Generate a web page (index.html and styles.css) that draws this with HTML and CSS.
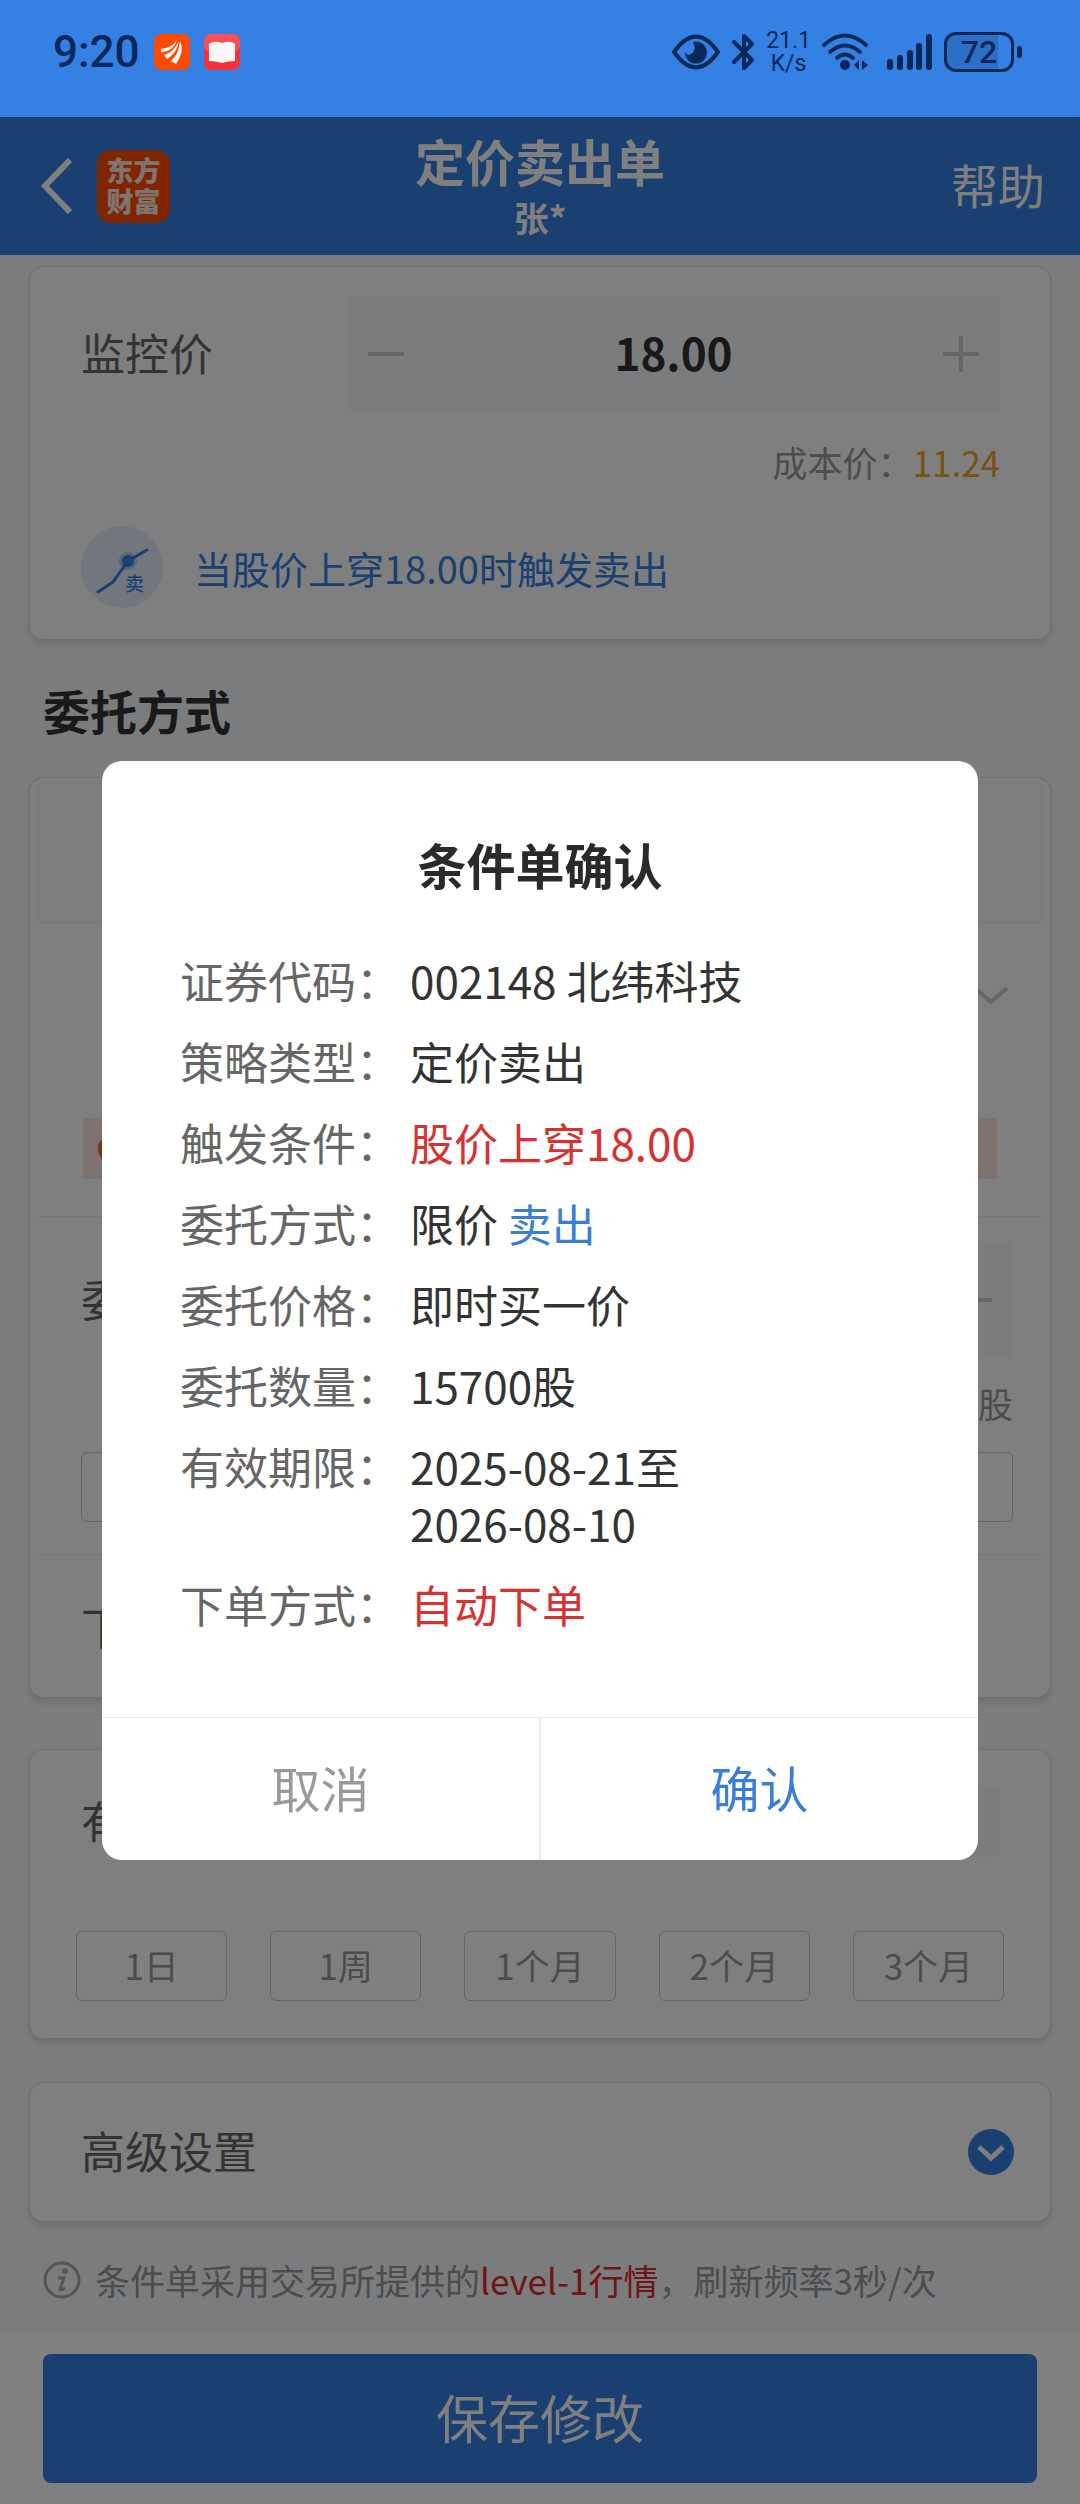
FILE: index.html
```html
<!DOCTYPE html>
<html lang="zh-CN">
<head>
<meta charset="UTF-8">
<meta name="viewport" content="width=device-width, initial-scale=1.0">
<title>定价卖出单</title>
<link rel="stylesheet" href="styles.css">
</head>
<body>

<div class="status-bar">
  <div class="status-left">
    <span class="clock">9:20</span>
    <svg class="app-icon" viewBox="0 0 36 36">
      <rect width="36" height="36" rx="7" fill="#ff4a00"/>
      <path d="M7 15Q18 14 23 6Q20 17 7 18.500ZM10 21Q20 18 25 7Q23 19 13 25ZM17 27Q25 20 26 7Q31 17 22 30Z" fill="#fff"/>
    </svg>
    <svg class="app-icon" viewBox="0 0 36 36">
      <rect width="36" height="36" rx="7" fill="#f5323c"/>
      <rect width="36" height="18" rx="7" fill="#f94f56"/>
      <path d="M5 10q5-4 13-1q8-3 13 1v17q-7 0-13 2q-6-2-13-2z" fill="#fff6f6"/>
    </svg>
  </div>
  <div class="status-right">
    <svg width="48" height="36" viewBox="0 0 48 36">
      <path d="M2 18Q24-13 46 18Q24 49 2 18Z" fill="none" stroke="#06295a" stroke-width="4"/>
      <path d="M21 8a11 11 0 1 1-8 10q2 4 6 2q6-4 2-12z" fill="#06295a"/>
    </svg>
    <svg width="24" height="38" viewBox="0 0 24 38">
      <path d="M3 9L21 27L13 35V3L21 11L3 29" fill="none" stroke="#06295a" stroke-width="4" stroke-linecap="round" stroke-linejoin="round"/>
    </svg>
    <span class="net-speed">21.1<br>K/s</span>
    <svg class="wifi" width="46" height="38" viewBox="0 0 46 38">
      <g fill="none" stroke="#06295a" stroke-width="4" stroke-linecap="round">
        <path d="M2 12Q23-7 44 12"/>
        <path d="M8 19Q23 6 38 19"/>
        <path d="M15 25Q23 18 31 25"/>
      </g>
      <circle cx="23" cy="32" r="5" fill="#06295a"/>
      <path d="M37 27v10l-5-5zM40 27v10l6-5z" fill="#06295a"/>
    </svg>
    <svg width="46" height="38" viewBox="0 0 46 38" fill="#06295a">
      <rect x="0" y="26" width="6" height="11" rx="3"/>
      <rect x="10" y="22" width="6" height="15" rx="3"/>
      <rect x="20" y="17" width="6" height="20" rx="3"/>
      <rect x="29" y="10" width="6" height="27" rx="3"/>
      <rect x="39" y="1" width="6" height="36" rx="3"/>
    </svg>
    <span class="battery"><span class="battery-box">72</span><span class="battery-tip"></span></span>
  </div>
</div>

<div class="app">
  <header class="header">
    <div class="header-side">
      <button type="button" class="back" aria-label="返回">
        <svg width="38" height="56" viewBox="0 0 38 56"><path d="M35 2L10 28L35 54" fill="none" stroke="#fff" stroke-width="6"/></svg>
      </button>
      <span class="logo">东方<br>财富</span>
    </div>
    <div class="header-title">
      <h1>定价卖出单</h1>
      <p>张*</p>
    </div>
    <div class="header-side header-right"><a href="#" class="help">帮助</a></div>
  </header>

  <main class="content">
    <section class="card price-card">
      <div class="field">
        <label for="price">监控价</label>
        <div class="stepper">
          <button type="button" aria-label="减"><svg width="36" height="36" viewBox="0 0 36 36"><path d="M0 18H36" stroke="#ccc" stroke-width="4"/></svg></button>
          <input type="text" id="price" value="18.00">
          <button type="button" aria-label="加"><svg width="36" height="36" viewBox="0 0 36 36"><path d="M0 18H36M18 0V36" stroke="#ccc" stroke-width="4"/></svg></button>
        </div>
      </div>
      <p class="cost">成本价：<span>11.24</span></p>
      <div class="hint">
        <svg width="83" height="83" viewBox="0 0 83 83">
          <circle cx="41" cy="41" r="41" fill="#e6edfb"/>
          <circle cx="47" cy="35" r="9" fill="#347fe2" opacity=".3"/>
          <path d="M17 66L32 56L47 35L66 24" fill="none" stroke="#347fe2" stroke-width="3" stroke-linecap="round"/>
          <circle cx="47" cy="35" r="6" fill="#347fe2"/>
          <text x="44" y="65" font-size="19" font-weight="500" fill="#347fe2">卖</text>
        </svg>
        <span>当股价上穿18.00时触发卖出</span>
      </div>
    </section>

    <h2 class="section-title">委托方式</h2>

    <section class="card order-card">
      <div class="tabs"></div>
      <div class="row price-row">
        <div class="select-wrap">
          <select aria-label="委托价格"><option></option></select>
          <svg width="44" height="44" viewBox="0 0 44 44"><path d="M6 15L22 29L38 15" fill="none" stroke="#ccc" stroke-width="4"/></svg>
        </div>
        <div class="tip">
          <svg width="28" height="28" viewBox="0 0 28 28"><circle cx="14" cy="14" r="12" fill="none" stroke="#e86a20" stroke-width="4"/></svg>
        </div>
      </div>
      <div class="row amount-row">
        <div class="field">
          <label for="amount">委托数量</label>
          <div class="stepper">
            <button type="button" aria-label="减"><svg width="36" height="36" viewBox="0 0 36 36"><path d="M0 18H36" stroke="#ccc" stroke-width="4"/></svg></button>
            <input type="text" id="amount">
            <button type="button" aria-label="加"><svg width="36" height="36" viewBox="0 0 36 36"><path d="M0 18H36M18 0V36" stroke="#ccc" stroke-width="4"/></svg></button>
          </div>
        </div>
        <p class="unit">股</p>
        <div class="ratio"></div>
      </div>
      <div class="row mode-row">下单方式</div>
    </section>

    <section class="card period-card">
      <div class="field">
        <label for="period">有效期限</label>
        <input type="text" id="period" class="period-input">
      </div>
      <div class="periods">
        <button type="button">1日</button>
        <button type="button">1周</button>
        <button type="button">1个月</button>
        <button type="button">2个月</button>
        <button type="button">3个月</button>
      </div>
    </section>

    <button type="button" class="card advanced">
      <span>高级设置</span>
      <svg width="46" height="46" viewBox="0 0 46 46">
        <circle cx="23" cy="23" r="23" fill="#347fe2"/>
        <path d="M11 18L23 29L35 18" fill="none" stroke="#fff" stroke-width="5"/>
      </svg>
    </button>

    <p class="notice">
      <svg width="38" height="38" viewBox="0 0 38 38">
        <circle cx="19" cy="19" r="17" fill="none" stroke="#aaa" stroke-width="3"/>
        <circle cx="22" cy="10" r="3" fill="#aaa"/>
        <path d="M15 17H21L17 28Q18 30 22 27" fill="none" stroke="#aaa" stroke-width="3"/>
      </svg>
      <span>条件单采用交易所提供的<em>level-1行情</em>，刷新频率3秒/次</span>
    </p>
  </main>

  <footer class="footer">
    <button type="button" class="save">保存修改</button>
  </footer>

  <div class="overlay">
    <div class="modal" role="dialog" aria-labelledby="modalTitle">
      <h2 id="modalTitle">条件单确认</h2>
      <dl class="details">
        <dt>证券代码：</dt><dd>002148 北纬科技</dd>
        <dt>策略类型：</dt><dd>定价卖出</dd>
        <dt>触发条件：</dt><dd class="red">股价上穿18.00</dd>
        <dt>委托方式：</dt><dd>限价 <span class="blue">卖出</span></dd>
        <dt>委托价格：</dt><dd>即时买一价</dd>
        <dt>委托数量：</dt><dd>15700股</dd>
        <dt>有效期限：</dt><dd>2025-08-21至<br>2026-08-10</dd>
        <dt>下单方式：</dt><dd class="red">自动下单</dd>
      </dl>
      <div class="modal-buttons">
        <button type="button" class="cancel">取消</button>
        <button type="button" class="confirm">确认</button>
      </div>
    </div>
  </div>
</div>

</body>
</html>
```

FILE: styles.css
```css
* {
  box-sizing: border-box;
}
body {
  margin: 0;
  font-family: "Noto Sans CJK SC", sans-serif;
  font-size: 44px;
  color: #666;
  background: #fff;
}
h1, h2, p, dl, dd {
  margin: 0;
}
button, input, select {
  margin: 0;
  padding: 0;
  border: none;
  background: none;
  font-family: inherit;
  font-size: inherit;
  color: inherit;
}
button {
  cursor: pointer;
}
svg {
  display: block;
  flex-shrink: 0;
}

/* status bar */
.status-bar {
  display: flex;
  justify-content: space-between;
  height: 117px;
  padding: 31px 58px 44px 53px;
  background: #3480e3;
  color: #06295a;
  font-family: Roboto, sans-serif;
}
.status-left, .status-right {
  display: flex;
  align-items: center;
}
.status-left {
  gap: 14px;
}
.clock {
  font-size: 44px;
  font-weight: 500;
}
.app-icon {
  width: 36px;
  height: 36px;
}
.status-right {
  gap: 11px;
}
.wifi {
  margin-right: 8px;
}
.net-speed {
  font-size: 23px;
  line-height: 23px;
  text-align: center;
}
.battery {
  display: flex;
  align-items: center;
  gap: 3px;
}
.battery-box {
  width: 70px;
  height: 40px;
  border: 3px solid #06295a;
  border-radius: 12px;
  background: linear-gradient(to right, #2d6fc4 80%, #3480e3 80%);
  font-size: 32px;
  font-weight: 500;
  line-height: 35px;
  text-align: center;
}
.battery-tip {
  width: 5px;
  height: 12px;
  border-radius: 3px;
  background: #06295a;
}

/* header */
.app {
  position: relative;
}
.header {
  display: flex;
  align-items: center;
  height: 138px;
  padding: 0 35px;
  background: #347fe2;
  color: #fff;
}
.header-side {
  display: flex;
  flex: 1;
  align-items: center;
  gap: 24px;
}
.header-right {
  justify-content: flex-end;
}
.logo {
  width: 73px;
  height: 73px;
  padding-top: 4px;
  border-radius: 14px;
  background: #ff4a00;
  color: #ffe8e0;
  font-size: 27px;
  font-weight: 900;
  line-height: 31px;
  text-align: center;
}
.header-title {
  padding-bottom: 4px;
  text-align: center;
}
.header-title h1 {
  font-size: 50px;
  line-height: 66px;
}
.header-title p {
  font-size: 35px;
  font-weight: bold;
  line-height: 48px;
}
.help {
  padding-bottom: 5px;
  color: #fff;
  font-size: 47px;
  text-decoration: none;
}

/* cards */
.content {
  display: flex;
  flex-direction: column;
  padding: 11px 29px 26px;
  background: #f6f8fc;
}
.card {
  border: 1px solid #dcdcdc;
  border-radius: 14px;
  background: #fff;
  box-shadow: 0 4px 6px rgba(0, 0, 0, 0.1);
}
.field {
  display: flex;
  align-items: center;
}
.field label {
  flex-shrink: 0;
  width: 266px;
  padding-bottom: 4px;
}
.stepper {
  display: flex;
  flex: 1;
  min-width: 0;
  height: 116px;
  padding: 0 21px;
  border-radius: 6px;
  background: #f6f8fc;
}
.stepper input {
  flex: 1;
  min-width: 0;
  padding-bottom: 4px;
  color: #333;
  font-weight: bold;
  text-align: center;
}
.price-card {
  padding: 29px 50px 30px 51px;
}
.cost {
  margin-top: 24px;
  color: #999;
  font-size: 35px;
  line-height: 52px;
  text-align: right;
}
.cost span {
  color: #f0a32a;
}
.hint {
  display: flex;
  align-items: center;
  gap: 30px;
  margin-top: 38px;
  color: #347fe2;
  font-size: 38px;
}
.section-title {
  margin: 39px 14px 37px;
  color: #333;
  font-size: 47px;
  line-height: 61px;
}

/* order settings */
.order-card {
  padding: 2px 7px 0;
}
.tabs {
  height: 143px;
  border-bottom: 1px solid #eee;
  background: #f9fafd;
}
.row {
  padding: 0 30px 0 44px;
  border-bottom: 1px solid #eee;
}
.price-row {
  padding-bottom: 37px;
}
.select-wrap {
  display: flex;
  align-items: center;
  height: 144px;
}
.select-wrap select {
  flex: 1;
  appearance: none;
}
.tip {
  display: flex;
  align-items: center;
  height: 61px;
  margin: 51px 16px 0 2px;
  padding-left: 15px;
  background: #fde5df;
}
.amount-row {
  padding-top: 25px;
  padding-bottom: 32px;
}
.unit {
  margin: 19px 0 23px;
  color: #999;
  font-size: 35px;
  line-height: 52px;
  text-align: right;
}
.ratio {
  height: 70px;
  border: 1px solid #c8c8c8;
  border-radius: 6px;
}
.mode-row {
  border-bottom: none;
  line-height: 142px;
}

/* period */
.period-card {
  margin-top: 51px;
  padding: 36px 46px 37px;
}
.period-card .field {
  padding: 0 4px 0 5px;
}
.period-input {
  flex: 1;
  height: 71px;
  min-width: 0;
  border-radius: 10px;
  background: #f4f8fc;
}
.periods {
  display: grid;
  grid-template-columns: repeat(5, 1fr);
  gap: 43px;
  margin-top: 74px;
}
.periods button {
  height: 70px;
  padding-bottom: 4px;
  border: 1px solid #c8c8c8;
  border-radius: 6px;
  color: #999;
  font-size: 35px;
}
.advanced {
  display: flex;
  align-items: center;
  justify-content: space-between;
  height: 140px;
  margin-top: 43px;
  padding: 0 36px 0 51px;
}
.advanced span {
  padding-bottom: 4px;
}
.notice {
  display: flex;
  align-items: center;
  gap: 14px;
  margin-top: 32px;
  padding-left: 14px;
  color: #999;
  font-size: 35px;
  line-height: 52px;
}
.notice em {
  color: #e02a2a;
  font-style: normal;
}

/* footer */
.footer {
  padding: 22px 43px 21px;
  background: #fff;
}
.save {
  display: block;
  width: 100%;
  height: 129px;
  padding-bottom: 5px;
  border-radius: 8px;
  background: #347fe2;
  color: #fff;
  font-size: 52px;
}

/* confirm dialog */
.overlay {
  position: absolute;
  inset: 0;
  display: flex;
  align-items: center;
  justify-content: center;
  padding: 0 102px;
  background: rgba(0, 0, 0, 0.5);
}
.modal {
  width: 100%;
  overflow: hidden;
  border-radius: 20px;
  background: #fff;
}
.modal h2 {
  padding-top: 74px;
  color: #2a2a2a;
  font-size: 49px;
  line-height: 57px;
  text-align: center;
}
.details {
  display: grid;
  grid-template-columns: 220px 1fr;
  gap: 24px 10px;
  padding: 60px 78px 84px;
  line-height: 57px;
}
.details dd {
  color: #333;
}
.details .red {
  color: #d93030;
}
.details .blue {
  color: #3a7fd5;
}
.modal-buttons {
  display: flex;
  border-top: 1px solid #e8eaec;
}
.modal-buttons button {
  flex: 1;
  height: 142px;
  padding-bottom: 6px;
  font-size: 49px;
}
.modal-buttons .cancel {
  border-right: 2px solid #e8eaec;
  color: #999;
}
.modal-buttons .confirm {
  color: #3a7fd5;
}
```
